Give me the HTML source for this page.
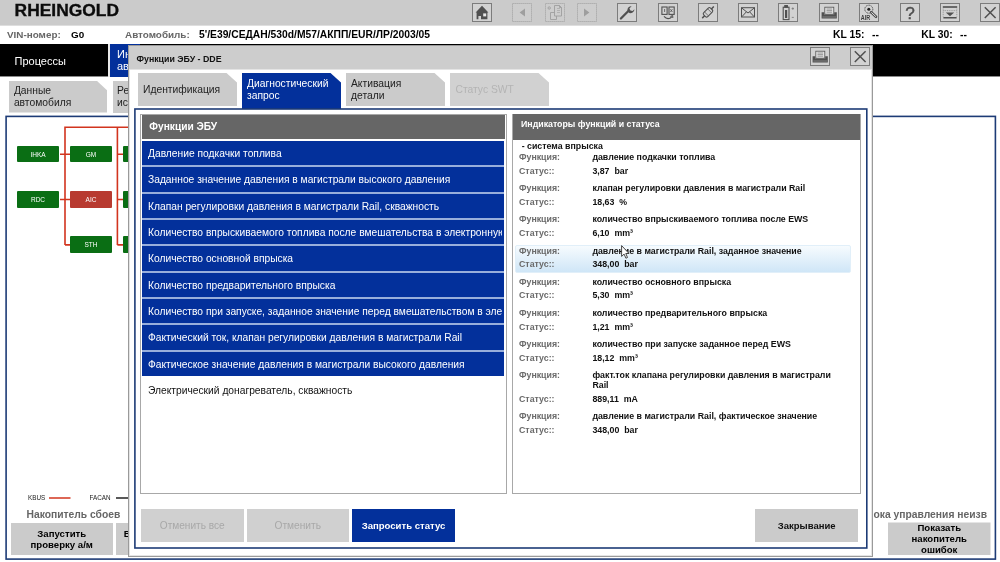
<!DOCTYPE html>
<html><head><meta charset="utf-8">
<style>
*{box-sizing:border-box;margin:0;padding:0}
html,body{width:1000px;height:562px;overflow:hidden;background:#fff}
body{font-family:"Liberation Sans",sans-serif;position:relative;color:#000;will-change:transform}
.a{position:absolute;white-space:nowrap}
.b{font-weight:bold}
#top{left:0;top:0;width:1000px;height:26px;background:#cbcbcb;border-bottom:1px solid #dedede}
.ib{position:absolute;top:3px;width:20px;height:19px;border:1px solid #8a8a8a;background:#d4d4d4}
.ib svg{position:absolute;left:0;top:0;width:18px;height:17px}
.ib.dis{border-color:#b4b4b4;background:#cfcfcf}
#bar{left:0;top:44px;width:1000px;height:32px;background:#000;box-shadow:0 1px 0 #8a8a8a}
.g{color:#666}
.tab{position:absolute;height:33px;background:#cbcbcb;clip-path:polygon(0 0,calc(100% - 10.5px) 0,100% 9.6px,100% 100%,0 100%)}
.btn{position:absolute;background:#cbcbcb;font-weight:bold;text-align:center}
.node{position:absolute;width:42px;height:16.6px;margin-top:-0.3px;background:#0a6e14;color:#fff;font-size:6.5px;text-align:center;line-height:17px;border-radius:1px}
.row{position:absolute;left:142px;width:362.3px;height:24.4px;background:#03309b;color:#fff;font-size:10.25px;line-height:25.4px;padding-left:6px;white-space:nowrap;overflow:hidden}
.f{position:absolute;left:519px;font-size:8.8px;font-weight:bold;color:#6a6a6a;white-space:nowrap}
.v{position:absolute;left:592.4px;font-size:8.8px;font-weight:bold;color:#111;white-space:nowrap}
</style></head><body>

<!-- ===== top grey bar ===== -->
<div id="top" class="a"></div>
<div class="a b" style="left:14.6px;top:-0.6px;font-size:17.4px;line-height:22px;color:#0c0c0c;-webkit-text-stroke:0.35px #0c0c0c">RHEINGOLD</div>
<!--ICONS_S-->
<svg class="a" style="left:472px;top:3px" width="20" height="19" viewBox="0 0 20 19"><rect x="0.5" y="0.5" width="19" height="18" fill="#d2d2d2" stroke="#7c7c7c" stroke-width="1"/><path d="M3.6 9.4 L10 2.8 L16.4 9.4 L15.4 9.4 L15.4 16.3 L9 16.3 L9 13 L6.4 13 L6.4 16.3 L4.6 16.3 L4.6 9.4 Z" fill="#505050"/><rect x="11.2" y="10.4" width="3" height="3" fill="#e6e6e6"/></svg>
<svg class="a" style="left:512px;top:3px" width="20" height="19" viewBox="0 0 20 19"><rect x="0.5" y="0.5" width="19" height="18" fill="#cdcdcd" stroke="#a4a4a4" stroke-width="1" stroke-dasharray="1.2 0.8"/><path d="M13 5.6 L13 13.4 L7.6 9.5 Z" fill="#9e9e9e"/></svg>
<svg class="a" style="left:544.5px;top:3px" width="20" height="19" viewBox="0 0 20 19"><rect x="0.5" y="0.5" width="19" height="18" fill="#cdcdcd" stroke="#a4a4a4" stroke-width="1" stroke-dasharray="1.2 0.8"/><g fill="none" stroke="#9e9e9e" stroke-width="0.9"><path d="M9.5 2.5 h5 l2 2 v8.5 h-7 z"/><path d="M14.5 2.5 v2 h2"/><path d="M9.5 9.5 h-4 v7 h6 v-3.5"/><circle cx="4.2" cy="5" r="1.2"/><path d="M12 5.5h3M12 7.5h3M12 9.5h3" stroke-width="0.6"/></g></svg>
<svg class="a" style="left:577px;top:3px" width="20" height="19" viewBox="0 0 20 19"><rect x="0.5" y="0.5" width="19" height="18" fill="#cdcdcd" stroke="#a4a4a4" stroke-width="1" stroke-dasharray="1.2 0.8"/><path d="M7 5.6 L7 13.4 L12.4 9.5 Z" fill="#9e9e9e"/></svg>
<svg class="a" style="left:617px;top:3px" width="20" height="19" viewBox="0 0 20 19"><rect x="0.5" y="0.5" width="19" height="18" fill="#d2d2d2" stroke="#7c7c7c" stroke-width="1"/><path d="M3.9 15.5 L11.6 7.8" stroke="#505050" stroke-width="2.3" stroke-linecap="round" fill="none"/><path d="M14.6 3.2 L12.4 5.6 L13.4 7.6 L15.6 7.9 L17.4 6.2 A3.6 3.6 0 0 1 11.2 9.0 A3.6 3.6 0 0 1 14.6 3.2 Z" fill="#505050"/></svg>
<svg class="a" style="left:657.5px;top:3px" width="20" height="19" viewBox="0 0 20 19"><rect x="0.5" y="0.5" width="19" height="18" fill="#d2d2d2" stroke="#7c7c7c" stroke-width="1"/><g fill="none" stroke="#505050" stroke-width="1.1"><rect x="3.9" y="4" width="5.2" height="7.4"/><rect x="11" y="4" width="5.2" height="7.4"/><path d="M6 13.4 Q10 17.8 14 13.6" stroke-width="1.2"/><path d="M12.4 13.4 L14.7 12.5 L14.8 15" stroke-width="1"/><path d="M6.6 6v3M12.4 6.2l2 2.8M14.4 6.2l-2 2.8" stroke-width="0.8"/></g></svg>
<svg class="a" style="left:697.7px;top:3px" width="20" height="19" viewBox="0 0 20 19"><rect x="0.5" y="0.5" width="19" height="18" fill="#d2d2d2" stroke="#7c7c7c" stroke-width="1"/><g transform="rotate(-45 10 9.3)" fill="none" stroke="#505050"><rect x="5.2" y="6.5" width="9.6" height="5.6" rx="1.6" stroke-width="1.1"/><path d="M5.2 9.3 h-3.4 M14.8 9.3 h3.4" stroke-width="1.5"/><path d="M7.8 6.5 v5.6 M12.2 6.5 v5.6" stroke-width="0.7"/></g></svg>
<svg class="a" style="left:738px;top:3px" width="20" height="19" viewBox="0 0 20 19"><rect x="0.5" y="0.5" width="19" height="18" fill="#d2d2d2" stroke="#7c7c7c" stroke-width="1"/><g fill="none" stroke="#505050" stroke-width="1"><rect x="3.5" y="4.7" width="13" height="9.3"/><path d="M3.8 5 L10 10 L16.2 5M3.8 13.8 L8.4 8.8M16.2 13.8 L11.6 8.8"/></g></svg>
<svg class="a" style="left:778.4px;top:3px" width="20" height="19" viewBox="0 0 20 19"><rect x="0.5" y="0.5" width="19" height="18" fill="#d2d2d2" stroke="#7c7c7c" stroke-width="1"/><g fill="none" stroke="#505050" stroke-width="1.1"><rect x="5.2" y="4.2" width="5.8" height="12.4"/><rect x="6.8" y="2.6" width="2.6" height="1.6" fill="#505050"/><rect x="7" y="7" width="2.2" height="8" fill="#505050" stroke="none"/><path d="M13.6 5.6h2.4M14.8 4.4v2.4M13.8 14.4h2" stroke-width="0.8" stroke="#777"/></g></svg>
<svg class="a" style="left:819px;top:3px" width="20" height="19" viewBox="0 0 20 19"><rect x="0.5" y="0.5" width="19" height="18" fill="#d2d2d2" stroke="#7c7c7c" stroke-width="1"/><rect x="5.8" y="4.2" width="9" height="7" fill="#e4e4e4" stroke="#505050" stroke-width="0.8"/><path d="M7.5 6h5.6M7.5 7.6h5.6M7.5 9.2h5.6" stroke="#777" stroke-width="0.7"/><path d="M2.6 9.2 L5.2 9.2 L5.2 11.6 L15.2 11.6 L15.2 9.2 L17.8 9.2 L17.8 15.4 L2.6 15.4 Z" fill="#505050"/><path d="M3.4 14h13.6" stroke="#9a9a9a" stroke-width="0.7"/></svg>
<svg class="a" style="left:859px;top:3px" width="20" height="19" viewBox="0 0 20 19"><rect x="0.5" y="0.5" width="19" height="18" fill="#d2d2d2" stroke="#7c7c7c" stroke-width="1"/><g fill="none" stroke="#505050"><circle cx="9.8" cy="6.2" r="4" stroke-width="1" stroke-dasharray="1.1 0.6"/><circle cx="9.8" cy="6.2" r="1.5" fill="#222" stroke="none"/><path d="M12.2 9.2 L17 13.8" stroke-width="2.6" stroke-linecap="round"/><path d="M12.6 9.6 L16.6 13.4" stroke="#e0e0e0" stroke-width="1" stroke-linecap="round"/></g><text x="1.7" y="17.2" font-family="Liberation Sans" font-size="6.8" font-weight="bold" fill="#3c3c3c" textLength="9.4" lengthAdjust="spacingAndGlyphs">AIR</text></svg>
<svg class="a" style="left:899.5px;top:3px" width="20" height="19" viewBox="0 0 20 19"><rect x="0.5" y="0.5" width="19" height="18" fill="#d2d2d2" stroke="#7c7c7c" stroke-width="1"/><text x="10" y="16.1" text-anchor="middle" font-family="Liberation Sans" font-size="17.2" fill="#505050" stroke="#505050" stroke-width="0.45">?</text></svg>
<svg class="a" style="left:940px;top:3px" width="20" height="19" viewBox="0 0 20 19"><rect x="0.5" y="0.5" width="19" height="18" fill="#d2d2d2" stroke="#7c7c7c" stroke-width="1"/><rect x="2.8" y="3.2" width="14.4" height="1.6" fill="#505050"/><rect x="3.4" y="14" width="13.2" height="1.5" fill="#505050"/><path d="M5.8 9.4 L14.2 9.4 L10 13.2 Z" fill="#505050"/><path d="M3.2 5.6v8M16.8 5.6v8M3.4 7.6h13.2" stroke="#8a8a8a" stroke-width="0.8" stroke-dasharray="1 0.8" fill="none"/></svg>
<svg class="a" style="left:980.4px;top:3px" width="20" height="19" viewBox="0 0 20 19"><rect x="0.5" y="0.5" width="19" height="18" fill="#d2d2d2" stroke="#7c7c7c" stroke-width="1"/><path d="M4.8 4.2 L15.6 15 M15.6 4.2 L4.8 15" stroke="#505050" stroke-width="1.5" fill="none"/></svg>
<!--ICONS_E-->

<!-- ===== VIN strip ===== -->
<div class="a b g" style="left:7px;top:29.3px;font-size:9.9px;line-height:12px">VIN-номер:</div>
<div class="a b" style="left:71px;top:29.3px;font-size:9.9px;line-height:12px">G0</div>
<div class="a b g" style="left:125px;top:29.3px;font-size:9.9px;line-height:12px">Автомобиль:</div>
<div class="a b" style="left:199px;top:29.3px;font-size:10.3px;line-height:12px">5'/E39/СЕДАН/530d/M57/АКПП/EUR/ЛР/2003/05</div>
<div class="a b" style="left:833px;top:29.3px;font-size:10.35px;line-height:12px">KL 15:</div>
<div class="a b" style="left:872px;top:29.3px;font-size:10.35px;line-height:12px">--</div>
<div class="a b" style="left:921.3px;top:29.3px;font-size:10.35px;line-height:12px">KL 30:</div>
<div class="a b" style="left:960px;top:29.3px;font-size:10.35px;line-height:12px">--</div>

<!-- ===== black bar ===== -->
<div id="bar" class="a"></div>
<div class="a" style="left:108px;top:44px;width:2px;height:33px;background:#e8e8e8"></div>
<div class="a" style="left:110px;top:44px;width:30px;height:33px;background:#03309b"></div>
<div class="a" style="left:14.5px;top:53.4px;font-size:11px;line-height:16px;color:#fff">Процессы</div>
<div class="a" style="left:117px;top:47.8px;font-size:11px;line-height:12.6px;color:#fff">Ин<br>ав</div>

<!-- ===== background sub tabs ===== -->
<div class="tab" style="left:9px;top:80.6px;width:98px;height:32px"></div>
<div class="a" style="left:13.9px;top:85px;font-size:10.3px;line-height:12.4px;color:#222">Данные<br>автомобиля</div>
<div class="tab" style="left:113px;top:80.6px;width:30px;height:32px;clip-path:none"></div>
<div class="a" style="left:117px;top:85px;font-size:10.3px;line-height:12.4px;color:#222">Ре<br>ис</div>

<!-- ===== background main frame ===== -->
<svg class="a" style="left:0;top:0" width="1000" height="562" viewBox="0 0 1000 562"><rect x="6.1" y="116.4" width="989.3" height="442.7" fill="none" stroke="#1d3b76" stroke-width="1.6"/></svg>
<div class="node" style="left:17px;top:146px;width:42px;background:#0a6e14">IHKA</div>
<div class="node" style="left:70px;top:146px;width:42px;background:#0a6e14">GM</div>
<div class="node" style="left:122.5px;top:146px;width:10px;background:#0a6e14"></div>
<div class="node" style="left:17px;top:191.3px;width:42px;background:#0a6e14">RDC</div>
<div class="node" style="left:70px;top:191.3px;width:42px;background:#b83a30">AIC</div>
<div class="node" style="left:122.5px;top:191.3px;width:10px;background:#0a6e14"></div>
<div class="node" style="left:70px;top:236.7px;width:42px;background:#0a6e14">STH</div>
<div class="node" style="left:122.5px;top:236.7px;width:10px;background:#0a6e14"></div>

<svg class="a" style="left:0;top:0" width="140" height="520" viewBox="0 0 140 520"><g fill="none" stroke="#d2341e" stroke-width="1.6"><path d="M65 245 V127.3 H140"/><path d="M117.4 127.3 V245"/><path d="M60 154.2 H70 M60 199.5 H70 M65 244.9 H70"/><path d="M117.4 154.2 H123 M117.4 199.5 H123 M117.4 244.9 H123"/><path d="M49 498 H70.5" stroke-width="1.5"/><path d="M116 498 H130" stroke="#222" stroke-width="1.5"/></g></svg>
<!-- legend -->
<div class="a" style="left:28px;top:494px;font-size:6.3px;line-height:8px;color:#222">KBUS</div>
<div class="a" style="left:89.5px;top:494px;font-size:6.3px;line-height:8px;color:#222">FACAN</div>
<div class="a b g" style="left:26.5px;top:508px;font-size:10.3px;line-height:13px">Накопитель сбоев</div>
<div class="a b g" style="left:873px;top:508px;font-size:10.3px;line-height:13px;width:114px;text-align:right;direction:rtl;overflow:hidden"><span style="direction:ltr;unicode-bidi:bidi-override">блока управления неизв</span></div>
<div class="btn" style="left:10.5px;top:522.5px;width:102.5px;height:32.5px;font-size:9.6px;line-height:11px;padding-top:5px">Запустить<br>проверку а/м</div>
<div class="btn" style="left:115.7px;top:522.5px;width:20px;height:32.5px;font-size:9.6px;line-height:11px;padding-top:5px;text-align:left;padding-left:8px">В</div>
<div class="btn" style="left:888px;top:522.5px;width:102.5px;height:32.5px;font-size:9.6px;line-height:11px;padding-top:0px;margin-top:-1px;height:33.5px;clip-path:inset(1px 0 0 0)">Показать<br>накопитель<br>ошибок</div>

<!-- ===== DIALOG ===== -->
<div class="a" style="left:128px;top:45px;width:745px;height:512px;background:#fff;border:1px solid #9a9a9a;box-shadow:0 0 0 1px #e4e4e4 inset"></div>
<div class="a" style="left:129px;top:46px;width:743px;height:23px;background:#cdcdcd;border-bottom:0;box-shadow:0 1px 0 #e4e4e4"></div>
<div class="a b" style="left:136.5px;top:53px;font-size:8.8px;line-height:12px;color:#111">Функции ЭБУ - DDE</div>
<!--DLG_S-->
<svg class="a" style="left:810px;top:47px" width="20" height="19" viewBox="0 0 20 19"><rect x="0.5" y="0.5" width="19" height="18" fill="#d2d2d2" stroke="#7c7c7c" stroke-width="1"/><rect x="5.8" y="4.2" width="9" height="7" fill="#e4e4e4" stroke="#505050" stroke-width="0.8"/><path d="M7.5 6h5.6M7.5 7.6h5.6M7.5 9.2h5.6" stroke="#777" stroke-width="0.7"/><path d="M2.6 9.2 L5.2 9.2 L5.2 11.6 L15.2 11.6 L15.2 9.2 L17.8 9.2 L17.8 15.4 L2.6 15.4 Z" fill="#505050"/><path d="M3.4 14h13.6" stroke="#9a9a9a" stroke-width="0.7"/></svg>
<svg class="a" style="left:849.6px;top:47px" width="20" height="19" viewBox="0 0 20 19"><rect x="0.5" y="0.5" width="19" height="18" fill="#d2d2d2" stroke="#7c7c7c" stroke-width="1"/><path d="M4.8 4.2 L15.6 15 M15.6 4.2 L4.8 15" stroke="#505050" stroke-width="1.5" fill="none"/></svg>
<!--DLG_E-->

<!-- dialog tabs -->
<div class="tab" style="left:138px;top:73px;width:99px"></div>
<div class="a" style="left:143px;top:83.6px;font-size:10.3px;line-height:12px;color:#222">Идентификация</div>
<div class="tab" style="left:242px;top:73px;width:99px;height:36px;background:#03309b"></div>
<div class="a" style="left:247px;top:77.5px;font-size:10.3px;line-height:12.5px;color:#fff">Диагностический<br>запрос</div>
<div class="tab" style="left:346px;top:73px;width:99px"></div>
<div class="a" style="left:351px;top:77.5px;font-size:10.3px;line-height:12.5px;color:#222">Активация<br>детали</div>
<div class="tab" style="left:450px;top:73px;width:99px;background:#d1d1d1"></div>
<div class="a" style="left:455.5px;top:83.6px;font-size:10.3px;line-height:12px;color:#b4b4b4">Статус SWT</div>

<!-- dialog blue frame -->
<svg class="a" style="left:0;top:0" width="1000" height="562" viewBox="0 0 1000 562"><rect x="134.9" y="109" width="731.9" height="439" fill="none" stroke="#1d3b76" stroke-width="1.6"/></svg>

<!-- left panel -->
<div class="a" style="left:140px;top:113.5px;width:366.6px;height:380px;border:1px solid #a8a8a8;background:#fff"></div>
<div class="a" style="left:141.5px;top:114.7px;width:363.2px;height:24.6px;background:#666"></div>
<div class="a b" style="left:149.3px;top:121px;font-size:10.2px;line-height:12px;color:#fff">Функции ЭБУ</div>
<div class="row" style="top:141.0px">Давление подкачки топлива</div>
<div class="a" style="left:142px;top:165.4px;width:362.3px;height:1.9px;background:#98aedb"></div>
<div class="row" style="top:167.3px">Заданное значение давления в магистрали высокого давления</div>
<div class="a" style="left:142px;top:191.7px;width:362.3px;height:1.9px;background:#98aedb"></div>
<div class="row" style="top:193.7px">Клапан регулировки давления в магистрали Rail, скважность</div>
<div class="a" style="left:142px;top:218.1px;width:362.3px;height:1.9px;background:#98aedb"></div>
<div class="row" style="top:220.0px">Количество впрыскиваемого топлива после вмешательства в электронную</div>
<div class="a" style="left:142px;top:244.4px;width:362.3px;height:1.9px;background:#98aedb"></div>
<div class="row" style="top:246.3px">Количество основной впрыска</div>
<div class="a" style="left:142px;top:270.7px;width:362.3px;height:1.9px;background:#98aedb"></div>
<div class="row" style="top:272.6px">Количество предварительного впрыска</div>
<div class="a" style="left:142px;top:297.0px;width:362.3px;height:1.9px;background:#98aedb"></div>
<div class="row" style="top:299.0px">Количество при запуске, заданное значение перед вмешательством в электронную</div>
<div class="a" style="left:142px;top:323.4px;width:362.3px;height:1.9px;background:#98aedb"></div>
<div class="row" style="top:325.3px">Фактический ток, клапан регулировки давления в магистрали Rail</div>
<div class="a" style="left:142px;top:349.7px;width:362.3px;height:1.9px;background:#98aedb"></div>
<div class="row" style="top:351.6px">Фактическое значение давления в магистрали высокого давления</div>
<div class="row" style="top:378.0px;background:#fff;color:#111">Электрический донагреватель, скважность</div>

<div class="a" style="left:502.4px;top:220.0px;width:1.9px;height:24.4px;background:#03309b"></div>
<div class="a" style="left:502.4px;top:299.0px;width:1.9px;height:24.4px;background:#03309b"></div>
<!-- right panel -->
<div class="a" style="left:511.5px;top:113.5px;width:349.3px;height:380px;border:1px solid #a8a8a8;background:#fff"></div>
<div class="a" style="left:512.6px;top:114.4px;width:347.6px;height:25.3px;background:#666"></div>
<div class="a b" style="left:521px;top:118.5px;font-size:8.8px;line-height:11px;color:#fff">Индикаторы функций и статуса</div>
<div class="a" style="left:514.5px;top:244.5px;width:336px;height:28.5px;background:linear-gradient(#f6fbfe,#cfe6f7);border:1px solid #e1eff9;border-radius:2px"></div>
<div class="v" style="left:521.7px;top:140.5px;line-height:11px">- система впрыска</div>
<div class="f" style="top:152.0px;line-height:10.3px">Функция:</div><div class="v" style="top:152.0px;line-height:10.3px">давление подкачки топлива</div>
<div class="f" style="top:166.0px;line-height:11px">Статус::</div><div class="v" style="top:166.0px;line-height:11px">3,87&nbsp; bar</div>
<div class="f" style="top:182.8px;line-height:10.3px">Функция:</div><div class="v" style="top:182.8px;line-height:10.3px">клапан регулировки давления в магистрали Rail</div>
<div class="f" style="top:196.8px;line-height:11px">Статус::</div><div class="v" style="top:196.8px;line-height:11px">18,63&nbsp; %</div>
<div class="f" style="top:214.3px;line-height:10.3px">Функция:</div><div class="v" style="top:214.3px;line-height:10.3px">количество впрыскиваемого топлива после EWS</div>
<div class="f" style="top:228.0px;line-height:11px">Статус::</div><div class="v" style="top:228.0px;line-height:11px">6,10&nbsp; mm³</div>
<div class="f" style="top:245.5px;line-height:10.3px">Функция:</div><div class="v" style="top:245.5px;line-height:10.3px">давление в магистрали Rail, заданное значение</div>
<div class="f" style="top:259.2px;line-height:11px">Статус::</div><div class="v" style="top:259.2px;line-height:11px">348,00&nbsp; bar</div>
<div class="f" style="top:276.6px;line-height:10.3px">Функция:</div><div class="v" style="top:276.6px;line-height:10.3px">количество основного впрыска</div>
<div class="f" style="top:290.3px;line-height:11px">Статус::</div><div class="v" style="top:290.3px;line-height:11px">5,30&nbsp; mm³</div>
<div class="f" style="top:307.8px;line-height:10.3px">Функция:</div><div class="v" style="top:307.8px;line-height:10.3px">количество предварительного впрыска</div>
<div class="f" style="top:321.9px;line-height:11px">Статус::</div><div class="v" style="top:321.9px;line-height:11px">1,21&nbsp; mm³</div>
<div class="f" style="top:338.6px;line-height:10.3px">Функция:</div><div class="v" style="top:338.6px;line-height:10.3px">количество при запуске заданное перед EWS</div>
<div class="f" style="top:352.6px;line-height:11px">Статус::</div><div class="v" style="top:352.6px;line-height:11px">18,12&nbsp; mm³</div>
<div class="f" style="top:369.7px;line-height:10.3px">Функция:</div><div class="v" style="top:369.7px;line-height:10.3px">факт.ток клапана регулировки давления в магистрали<br>Rail</div>
<div class="f" style="top:394.4px;line-height:11px">Статус::</div><div class="v" style="top:394.4px;line-height:11px">889,11&nbsp; mA</div>
<div class="f" style="top:410.8px;line-height:10.3px">Функция:</div><div class="v" style="top:410.8px;line-height:10.3px">давление в магистрали Rail, фактическое значение</div>
<div class="f" style="top:424.8px;line-height:11px">Статус::</div><div class="v" style="top:424.8px;line-height:11px">348,00&nbsp; bar</div>

<svg class="a" style="left:620.6px;top:244.6px" width="10" height="15" viewBox="0 0 10 15"><path d="M0.6 0.6 L0.6 11.4 L3.1 9.1 L4.9 13.2 L6.5 12.5 L4.8 8.5 L8 8.5 Z" fill="#fff" stroke="#333" stroke-width="0.9" stroke-linejoin="round"/></svg>
<!-- dialog buttons -->
<div class="btn" style="left:141px;top:509.3px;width:102.5px;height:32.5px;font-size:10.1px;line-height:34.6px;color:#a8a8a8;font-weight:normal;background:#d0d0d0">Отменить все</div>
<div class="btn" style="left:246.5px;top:509.3px;width:102.5px;height:32.5px;font-size:10.2px;line-height:34.6px;color:#a8a8a8;font-weight:normal;background:#d0d0d0">Отменить</div>
<div class="btn" style="left:352px;top:509.3px;width:103px;height:32.5px;font-size:9.55px;line-height:34px;color:#fff;background:#03309b">Запросить статус</div>
<div class="btn" style="left:755px;top:509.4px;width:103.4px;height:32.4px;font-size:9.5px;line-height:34px;color:#111">Закрывание</div>

</body></html>
